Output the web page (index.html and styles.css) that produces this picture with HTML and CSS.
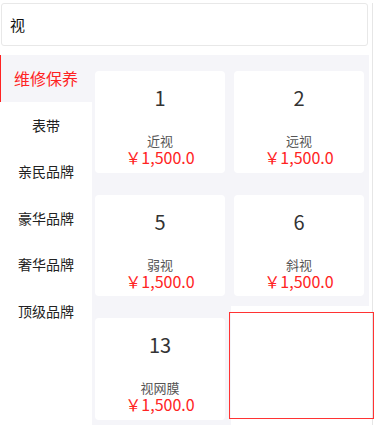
FILE: index.html
```html
<!DOCTYPE html>
<html lang="zh">
<head>
<meta charset="utf-8">
<link rel="stylesheet" href="styles.css">
</head>
<body>
<div class="page">
  <div class="search">视</div>
  <div class="main">
    <div class="sidebar">
      <div class="item active">维修保养</div>
      <div class="item">表带</div>
      <div class="item">亲民品牌</div>
      <div class="item">豪华品牌</div>
      <div class="item">奢华品牌</div>
      <div class="item">顶级品牌</div>
    </div>
    <div class="content">
      <div class="card"><div class="num">1</div><div class="label">近视</div><div class="price">￥1,500.0</div></div>
      <div class="card"><div class="num">2</div><div class="label">远视</div><div class="price">￥1,500.0</div></div>
      <div class="card"><div class="num">5</div><div class="label">弱视</div><div class="price">￥1,500.0</div></div>
      <div class="card"><div class="num">6</div><div class="label">斜视</div><div class="price">￥1,500.0</div></div>
      <div class="card"><div class="num">13</div><div class="label">视网膜</div><div class="price">￥1,500.0</div></div>
    </div>
  </div>
  <div class="drag"></div>
</div>
<div class="outline"></div>
</body>
</html>
```
FILE: styles.css
```css
html, body {
  margin: 0;
  padding: 0;
  background: #fff;
  font-family: "Noto Sans CJK SC", "Noto Sans", sans-serif;
}
body {
  position: relative;
  height: 425px;
  overflow: hidden;
}
.page {
  position: relative;
  width: 372px;
  height: 425px;
  border-right: 1px solid #e6e6e6;
}
.search {
  box-sizing: border-box;
  margin: 3px 4px 0 1px;
  height: 43px;
  border: 1px solid #e8e8e8;
  border-radius: 3px;
  padding-left: 8px;
  display: flex;
  align-items: center;
  font-size: 15px;
  color: #111;
}
.main {
  margin-top: 9px;
  width: 369px;
  display: flex;
  height: 370px;
  overflow: hidden;
}
.sidebar {
  width: 92px;
  flex: none;
  background: #fff;
}
.item {
  height: 46.5px;
  display: flex;
  align-items: center;
  justify-content: center;
  font-size: 14px;
  color: #222;
}
.item.active {
  background: #f5f5f9;
  color: #ff2323;
  font-size: 16px;
  box-shadow: inset 1px 0 0 #ff2323;
}
.content {
  flex: 1;
  background: #f5f5f9;
  padding: 16px 5px 0 3px;
  display: grid;
  grid-template-columns: 130px 130px;
  grid-auto-rows: 101.5px;
  column-gap: 9px;
  row-gap: 22px;
  align-content: start;
}
.card {
  background: #fff;
  border-radius: 4px;
  display: flex;
  flex-direction: column;
  align-items: center;
  padding-top: 13px;
  box-sizing: border-box;
}
.num {
  font-size: 20px;
  line-height: 28px;
  color: #333;
}
.label {
  margin-top: 21px;
  font-size: 13px;
  line-height: 15px;
  color: #555;
}
.price {
  margin-top: 1px;
  font-size: 16px;
  line-height: 17px;
  color: #ff2323;
}
.drag {
  position: absolute;
  left: 231px;
  top: 303px;
  width: 141px;
  height: 122px;
  background: #fff;
}
.outline {
  position: absolute;
  left: 229px;
  top: 312px;
  width: 145px;
  height: 107px;
  box-sizing: border-box;
  box-shadow: inset 0 0 0 1px #ff3333;
}
```
